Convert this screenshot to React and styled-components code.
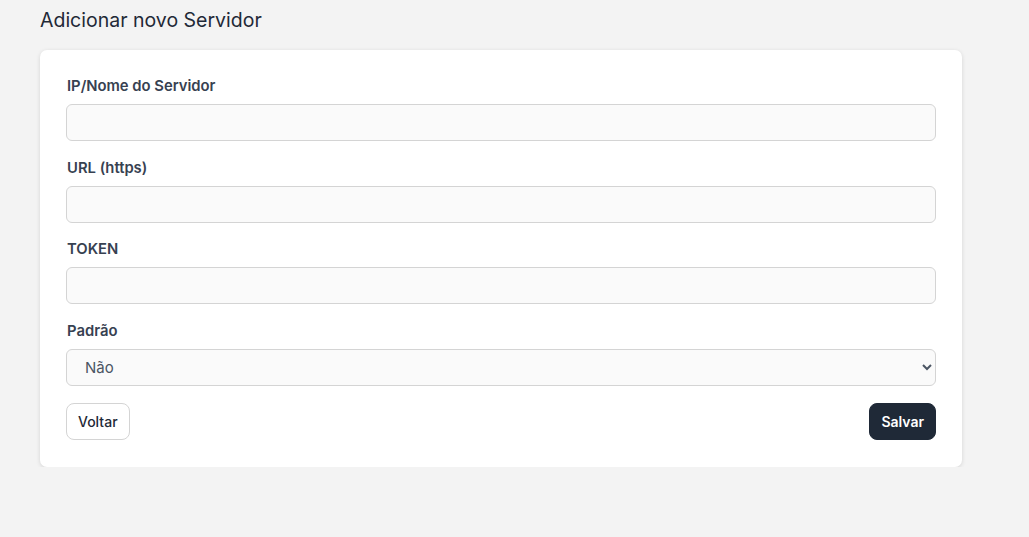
import React from 'react';
import styled, { createGlobalStyle } from 'styled-components';

const Global = createGlobalStyle`
  body {
    margin: 0;
    background: #f3f3f3;
    font-family: Inter, "Noto Sans", sans-serif;
  }
`;

const Page = styled.div`
  padding: 8px 67px 0 40px;
`;

const Title = styled.h1`
  margin: 0 0 18px;
  font-size: 19.5px;
  line-height: 24px;
  font-weight: 400;
  color: #1f2937;
`;

const Card = styled.form`
  width: 922px;
  box-sizing: border-box;
  background: #fff;
  border-radius: 7px;
  box-shadow: 0 1px 4px rgba(0, 0, 0, 0.13);
  padding: 26px 26px 27px;
`;

const Field = styled.div`
  display: flex;
  flex-direction: column;
  gap: 8px;
  margin-bottom: 16.67px;
`;

const Label = styled.label`
  font-size: 14.8px;
  line-height: 20px;
  font-weight: 600;
  color: #374151;
  padding-left: 1px;
`;

const Input = styled.input`
  height: 37px;
  box-sizing: border-box;
  border: 1px solid #d4d4d4;
  border-radius: 6px;
  background: #fafafa;
  padding: 0 18px;
  font: inherit;
  font-size: 15px;
  outline: none;
`;

const Select = styled.select`
  height: 37px;
  box-sizing: border-box;
  border: 1px solid #d4d4d4;
  border-radius: 6px;
  background: #fafafa;
  padding: 0 14px;
  font: inherit;
  font-size: 15px;
  color: #4b5563;
  outline: none;
`;

const Actions = styled.div`
  display: flex;
  justify-content: space-between;
  margin-top: 1px;
`;

const Button = styled.button`
  height: 37px;
  padding: 0 11px;
  border-radius: 8px;
  font: inherit;
  font-size: 14px;
  font-weight: ${p => (p.$dark ? 600 : 500)};
  cursor: pointer;
  border: 1px solid ${p => (p.$dark ? '#1f2937' : '#d4d4d4')};
  background: ${p => (p.$dark ? '#1f2937' : '#fff')};
  color: ${p => (p.$dark ? '#fff' : '#1f2937')};
`;

export default function App() {
  return (
    <Page>
      <Global />
      <Title>Adicionar novo Servidor</Title>
      <Card onSubmit={e => e.preventDefault()}>
        <Field>
          <Label>IP/Nome do Servidor</Label>
          <Input type="text" />
        </Field>
        <Field>
          <Label>URL (https)</Label>
          <Input type="text" />
        </Field>
        <Field>
          <Label>TOKEN</Label>
          <Input type="text" />
        </Field>
        <Field>
          <Label>Padrão</Label>
          <Select defaultValue="0">
            <option value="0">Não</option>
            <option value="1">Sim</option>
          </Select>
        </Field>
        <Actions>
          <Button type="button">Voltar</Button>
          <Button type="submit" $dark>Salvar</Button>
        </Actions>
      </Card>
    </Page>
  );
}
